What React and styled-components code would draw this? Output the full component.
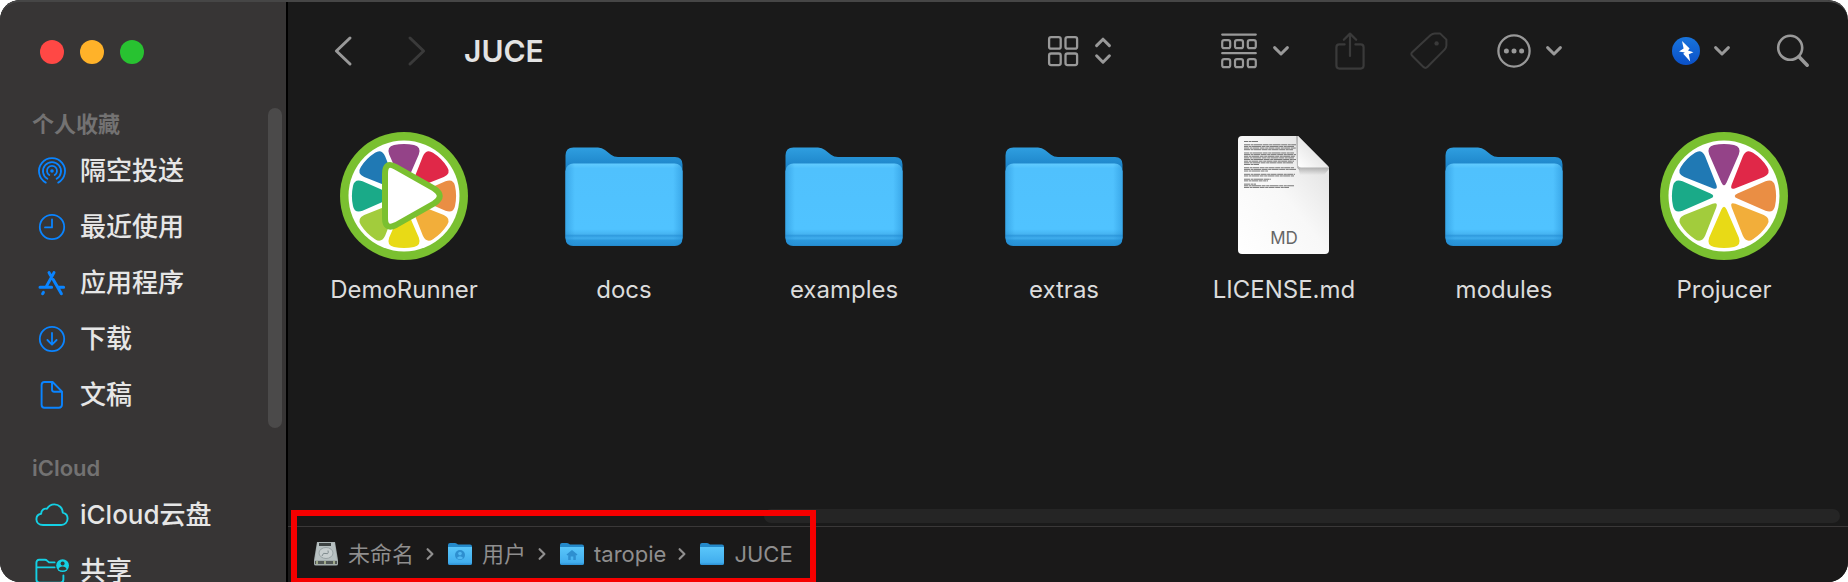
import React from "react";
import styled, { createGlobalStyle } from "styled-components";

const Global = createGlobalStyle`
  * { box-sizing: border-box; }
  body {
    margin: 0;
    background: #fff;
    font-family: Inter, "Noto Sans CJK SC", "Liberation Sans", sans-serif;
  }
  button { border: 0; padding: 0; background: none; color: inherit; font: inherit; cursor: default; }
  a { color: inherit; text-decoration: none; }
  ul, ol { list-style: none; margin: 0; padding: 0; }
  svg { display: block; flex: none; overflow: visible; }
`;

const Window = styled.div`
  position: relative;
  display: flex;
  height: 100vh;
  border-radius: 20px;
  overflow: hidden;
  background: #1a1a1a;
  color: #dfdfdf;

  &::after {
    content: "";
    position: absolute;
    inset: 0;
    border-radius: 20px;
    border-top: 2px solid #464646;
    pointer-events: none;
  }
`;

const Sidebar = styled.aside`
  position: relative;
  flex: none;
  width: 288px;
  overflow: hidden;
  background: #373535;
  border-right: 2px solid #000;
`;

const TrafficLights = styled.div`
  display: flex;
  gap: 16px;
  padding: 40px 40px 41px;
`;

const Light = styled.button`
  width: 24px;
  height: 24px;
  border-radius: 50%;
  background: ${(p) => p.$color};
`;

const Group = styled.section`
  padding-bottom: 26px;
`;

const GroupTitle = styled.h2`
  margin: 0;
  padding-left: 32px;
  font-size: 22px;
  line-height: 38px;
  font-weight: 600;
  color: #737272;
`;

const SideLink = styled.a`
  display: flex;
  align-items: center;
  gap: 8px;
  height: 56px;
  padding-left: 32px;
  font-size: 26px;
  line-height: 40px;
  font-weight: 500;
  color: #e6e6e6;
  white-space: nowrap;

  svg { color: ${(p) => p.$tint}; }
`;

const SideIcon = styled.span`
  display: flex;
  justify-content: center;
  width: 40px;
`;

const SideThumb = styled.div`
  position: absolute;
  top: 108px;
  right: 4px;
  width: 14px;
  height: 320px;
  border-radius: 7px;
  background: #4b4a4a;
`;

const Main = styled.main`
  flex: 1;
  min-width: 0;
  display: flex;
  flex-direction: column;
`;

const Toolbar = styled.header`
  flex: none;
  display: flex;
  align-items: center;
  height: 102px;
  padding: 0 38px 0 46px;
  color: #999;
`;

const Tool = styled.button`
  display: flex;
  align-items: center;
  gap: ${(p) => p.$gap || 0}px;
  margin-right: ${(p) => p.$after || 0}px;
  color: ${(p) => (p.disabled ? "#3a3a3a" : "#999")};
`;

const Title = styled.h1`
  flex: 1;
  margin: 0;
  font-size: 30px;
  line-height: 40px;
  font-weight: 600;
  color: #e3e3e3;
`;

const Files = styled.ul`
  flex: 1;
  min-height: 0;
  display: grid;
  grid-template-columns: repeat(auto-fill, 220px);
  align-content: start;
  padding: 30px 6px 0;
  overflow: hidden;
`;

const FileLink = styled.a`
  display: flex;
  flex-direction: column;
  align-items: center;
  gap: 14px;
  font-size: 24px;
  line-height: 32px;
  font-weight: 400;
  color: #dcdcdc;
`;

const ScrollTrack = styled.div`
  flex: none;
  width: 69%;
  height: 14px;
  margin: 0 8px 3px auto;
  border-radius: 7px;
  background: #252525;
`;

const PathBar = styled.nav`
  position: relative;
  flex: none;
  height: 56px;
  border-top: 1px solid #3a3838;
  background: #1a1919;
`;

const Crumbs = styled.ol`
  display: flex;
  align-items: center;
  height: 54px;
  padding-left: 26px;
`;

const Crumb = styled.li`
  display: flex;
  align-items: center;
  color: #8f8e8e;
`;

const CrumbLink = styled.a`
  display: flex;
  align-items: center;
  gap: 10px;
  font-size: 22px;
  line-height: 32px;
`;

const Separator = styled.span`
  padding: 0 14px 0 12px;
`;

const Highlight = styled.div`
  position: absolute;
  top: -17px;
  left: 3px;
  width: 525px;
  height: 74px;
  border: 6px solid #f60000;
  pointer-events: none;
`;

const stroke = (w) => ({
  fill: "none",
  stroke: "currentColor",
  strokeWidth: w,
  strokeLinecap: "round",
  strokeLinejoin: "round",
});

const AirDrop = () => (
  <svg width="28" height="28" viewBox="0 0 28 28" {...stroke(1.8)}>
    <circle cx="14" cy="14" r="1.8" fill="currentColor" stroke="none" />
    <path d="M11.3 18A5 5 0 1 1 16.7 18" />
    <path d="M9.4 21.8A9 9 0 1 1 18.6 21.8" />
    <path d="M7.8 25.6A13 13 0 1 1 20.2 25.6" />
  </svg>
);

const Clock = () => (
  <svg width="28" height="28" viewBox="0 0 28 28" {...stroke(1.8)}>
    <circle cx="14" cy="14" r="12.2" />
    <path d="M14 6.5V14.4H7" />
  </svg>
);

const Apps = () => (
  <svg width="28" height="28" viewBox="0 0 28 28" {...stroke(3)}>
    <path d="M16 3.6L8.4 17.4M5.4 23.4L4.6 24.8M11 3.6L12.6 6.4M15.2 10.6L23.4 24.8M2 18.2H13.6M20.6 18.2H25.6" />
  </svg>
);

const Download = () => (
  <svg width="28" height="28" viewBox="0 0 28 28" {...stroke(1.8)}>
    <circle cx="14" cy="14" r="12.2" />
    <path d="M14 8V19.4M9.4 15L14 19.6L18.6 15" />
  </svg>
);

const Doc = () => (
  <svg width="28" height="28" viewBox="0 0 28 28" {...stroke(1.9)}>
    <path d="M6.4 1H14.6L24 10.6V23.6Q24 26.8 20.8 26.8H6.4Q3.6 26.8 3.6 23.8V4Q3.6 1 6.4 1ZM14 1.4V8.6Q14 10.8 16.2 10.8H23.6" />
  </svg>
);

const Cloud = () => (
  <svg width="34" height="24" viewBox="0 0 34 24" {...stroke(1.9)}>
    <path d="M8 22C4 22 1.4 19.4 1.4 16.2C1.4 13.2 3.6 11.2 6.2 10.8C6 7.6 9 5 12 5.8C13.6 3 16.4 1.4 19.4 1.4C24 1.4 27.6 5 27.8 9.6C30.6 10.2 32.6 12.6 32.6 15.6C32.6 19.2 29.8 22 26.2 22Z" />
  </svg>
);

const Shared = () => (
  <svg width="34" height="26" viewBox="0 0 34 26" {...stroke(1.9)}>
    <path d="M19.6 4.4H14L12 2.6Q11.2 1.8 10 1.8H4.2Q1.4 1.8 1.4 4.8V21.6Q1.4 24.6 4.4 24.6H25.4Q28.4 24.6 28.4 21.6V17.4M1.4 9.4H19.6" />
    <circle cx="27.6" cy="7.6" r="6.4" fill="currentColor" stroke="none" />
    <circle cx="27.6" cy="5.6" r="2" fill="#373535" stroke="none" />
    <path d="M23.6 11.2Q24.4 8.6 27.6 8.6T31.6 11.2Q30 12.6 27.6 12.6T23.6 11.2Z" fill="#373535" stroke="none" />
  </svg>
);

const BackForward = ({ forward }) => (
  <svg width="18" height="30" viewBox="0 0 18 30" {...stroke(3)}>
    <path d={forward ? "M2 2L15.6 15L2 28" : "M16 2L2.4 15L16 28"} />
  </svg>
);

const ChevronDown = () => (
  <svg width="16" height="10" viewBox="0 0 16 10" {...stroke(3)}>
    <path d="M1.6 1.6L8 8L14.4 1.6" />
  </svg>
);

const UpDown = () => (
  <svg width="16" height="28" viewBox="0 0 16 28" {...stroke(3)}>
    <path d="M1.6 8.6L8 2.2L14.4 8.6M1.6 18.8L8 25.2L14.4 18.8" />
  </svg>
);

const GridIcon = () => (
  <svg width="32" height="32" viewBox="0 0 32 32" {...stroke(2.3)}>
    {[2.1, 18.5].map((x) =>
      [2.1, 18.5].map((y) => <rect key={x + "-" + y} x={x} y={y} width="11.6" height="11.6" rx="2" />)
    )}
  </svg>
);

const GroupIcon = () => (
  <svg width="36" height="36" viewBox="0 0 36 36" {...stroke(2.2)}>
    <path d="M1.2 1.6H34.8M1.2 20.2H34.8" />
    {[1.2, 14, 26.8].map((x) =>
      [7.2, 26.2].map((y) => <rect key={x + "-" + y} x={x} y={y} width="8" height="8" rx="2" />)
    )}
  </svg>
);

const Share = () => (
  <svg width="30" height="38" viewBox="0 0 30 38" {...stroke(2.2)}>
    <path d="M9.6 12.4H4.4Q1.4 12.4 1.4 15.4V33.6Q1.4 36.6 4.4 36.6H25.6Q28.6 36.6 28.6 33.6V15.4Q28.6 12.4 25.6 12.4H20.4M15 24V1.6M8.8 7.8L15 1.6L21.2 7.8" />
  </svg>
);

const Tag = () => (
  <svg width="38" height="38" viewBox="0 0 38 38" {...stroke(2)}>
    <path d="M20.4 3.2Q22.4 1.4 24.8 1.4H30L36.4 7.6V13.6Q36.4 15.8 34.6 17.6L17.6 34.8Q15.4 37 13.2 34.8L2.2 23.8Q.4 22 2.2 20.2Z" />
    <circle cx="26.6" cy="11.4" r="2.2" fill="currentColor" stroke="none" />
  </svg>
);

const More = () => (
  <svg width="34" height="34" viewBox="0 0 34 34" {...stroke(2.3)}>
    <circle cx="17" cy="17" r="15.6" />
    <g fill="currentColor" stroke="none">
      <circle cx="9.4" cy="17" r="2.5" />
      <circle cx="17" cy="17" r="2.5" />
      <circle cx="24.6" cy="17" r="2.5" />
    </g>
  </svg>
);

const Bolt = () => (
  <svg width="28" height="28" viewBox="0 0 28 28">
    <defs>
      <linearGradient id="bolt" x1="0" y1="0" x2="0" y2="1">
        <stop offset="0" stopColor="#1874dc" />
        <stop offset="1" stopColor="#0a50c8" />
      </linearGradient>
    </defs>
    <circle cx="14" cy="14" r="14" fill="url(#bolt)" />
    <path d="M10 4L17.6 11.6L16 13.4L21.4 15.2L16.8 17.2L18.2 24.4L11.2 16.8L12.8 15.6L7 14.6L11.6 11.6Z" fill="#fff" />
  </svg>
);

const Search = () => (
  <svg width="34" height="34" viewBox="0 0 34 34" {...stroke(2.6)}>
    <circle cx="14.2" cy="13.8" r="12" />
    <path d="M23 22.8L31.2 31.2" strokeWidth="3.6" />
  </svg>
);

const SLICES = ["#944388", "#e02848", "#ea8e44", "#f2ae3a", "#e8da16", "#a2cc3c", "#1aaa88", "#2079b4"];

const Citrus = ({ play }) => (
  <svg width="128" height="128" viewBox="0 0 128 128">
    <circle cx="64" cy="64" r="64" fill="#7ac030" />
    <circle cx="64" cy="64" r="55.5" fill="#fff" />
    {SLICES.map((color, i) => (
      <path
        key={color}
        fill={color}
        transform={`rotate(${i * 45} 64 64)`}
        d="M61.4 50.500Q64 56 66.6 50.500L78.800 22.500Q81.600 14.500 74 13Q64 10.800 54 13Q46.400 14.500 49.200 22.500Z"
      />
    ))}
    {play && (
      <path
        d="M45 42Q45 28.500 56 35L94 56.500Q105.500 64 94 71.500L56 93Q45 98.500 45 86Z"
        fill="#fff"
        stroke="#7ac030"
        strokeWidth="6"
        strokeLinejoin="round"
      />
    )}
  </svg>
);

const Folder = () => (
  <svg width="128" height="128" viewBox="0 0 128 128">
    <defs>
      <linearGradient id="back" x1="0" y1="0" x2="0" y2="1">
        <stop offset="0" stopColor="#2f9fe0" />
        <stop offset="0.2" stopColor="#1c83c8" />
        <stop offset="1" stopColor="#1f88cc" />
      </linearGradient>
      <linearGradient id="front" x1="0" y1="0" x2="0" y2="1">
        <stop offset="0" stopColor="#62ccff" />
        <stop offset="0.06" stopColor="#50c1fd" />
        <stop offset="0.8" stopColor="#50c3ff" />
        <stop offset="0.86" stopColor="#46b4f2" />
        <stop offset="0.88" stopColor="#2f9ade" />
        <stop offset="0.91" stopColor="#40aeee" />
        <stop offset="0.94" stopColor="#2b98dc" />
        <stop offset="1" stopColor="#2790d4" />
      </linearGradient>
      <linearGradient id="edge">
        <stop offset="0" stopColor="#2089d0" stopOpacity="0.45" />
        <stop offset="0.08" stopColor="#2089d0" stopOpacity="0" />
        <stop offset="0.92" stopColor="#2089d0" stopOpacity="0" />
        <stop offset="1" stopColor="#2089d0" stopOpacity="0.45" />
      </linearGradient>
    </defs>
    <path d="M5.5 23.5Q5.5 15.5 13.5 15.5H38Q42 15.5 45 18L51 22.8Q54 25 58 25H115Q122.500 25 122.500 32.500V106Q122.500 114 114.500 114H13.500Q5.500 114 5.500 106Z" fill="url(#back)" />
    <rect x="5.5" y="31.500" width="117" height="82" rx="8" fill="url(#front)" />
    <rect x="5.5" y="31.500" width="117" height="82" rx="8" fill="url(#edge)" />
  </svg>
);

const LINES = [14, 0, 52, 50, 52, 49, 0, 50, 52, 51, 50, 52, 50, 49, 15, 0, 50, 52, 24, 0, 51, 50, 0, 27, 24, 0, 12, 50, 45];

const MarkdownDoc = () => (
  <svg width="128" height="128" viewBox="0 0 128 128">
    <defs>
      <linearGradient id="paper" x1="0" y1="1" x2="1" y2="0">
        <stop offset="0" stopColor="#fff" />
        <stop offset="0.5" stopColor="#f8f8f8" />
        <stop offset="1" stopColor="#dcdcdc" />
      </linearGradient>
      <linearGradient id="fold" x1="0" y1="1" x2="0.6" y2="0.4">
        <stop offset="0" stopColor="#fff" />
        <stop offset="1" stopColor="#e4e4e4" />
      </linearGradient>
      <linearGradient id="shade" x1="0" y1="0" x2="0" y2="1">
        <stop offset="0" stopColor="#000" stopOpacity="0.3" />
        <stop offset="1" stopColor="#000" stopOpacity="0" />
      </linearGradient>
    </defs>
    <path d="M22 4H78L109 35V118Q109 122 105 122H22Q18 122 18 118V8Q18 4 22 4Z" fill="url(#paper)" />
    {LINES.map((w, i) =>
      w ? <path key={i} d={`M24 ${9.500 + i * 1.640}h${w}`} stroke="#777" strokeWidth="1" strokeDasharray={`${4 + (i % 3)} .6 3 .4 ${6 + (i % 4)} .6`} /> : null
    )}
    <path d="M78 34H109V37L104 43H80Z" fill="url(#shade)" />
    <path d="M76 4H78V35L80 38L77 36Z" fill="#000" opacity="0.2" />
    <path d="M78 4L109 35.500H81Q78 35.500 78 32.500Z" fill="url(#fold)" />
    <text x="64" y="112" textAnchor="middle" fontSize="17" fill="#666" fontFamily="Inter, sans-serif">MD</text>
  </svg>
);

const MiniFolder = ({ mark }) => (
  <svg width="24" height="24" viewBox="0 0 24 24">
    <defs>
      <linearGradient id="mini" x1="0" y1="0" x2="0" y2="1">
        <stop offset="0" stopColor="#5ac6fa" />
        <stop offset="0.85" stopColor="#42aeee" />
        <stop offset="1" stopColor="#2c8fd2" />
      </linearGradient>
    </defs>
    <path d="M0 3Q0 1 2 1H7Q8.500 1 10 2.500H22Q24 2.500 24 4.500V21Q24 23 22 23H2Q0 23 0 21Z" fill="#2489ca" />
    <path d="M0 5H24V21Q24 23 22 23H2Q0 23 0 21Z" fill="url(#mini)" />
    {mark === "user" && (
      <g>
        <circle cx="12" cy="13" r="5" fill="#2e8fd0" />
        <circle cx="12" cy="11.600" r="1.800" fill="#50b8f2" />
        <path d="M8.800 16Q12 12.600 15.200 16Q12 18.400 8.800 16Z" fill="#50b8f2" />
      </g>
    )}
    {mark === "home" && <path d="M6.500 12.600L12 8L17.500 12.600L16.600 13.600L15.800 13V18H13.300V14.500H10.700V18H8.200V13L7.400 13.600Z" fill="#2e8fd0" />}
  </svg>
);

const Disk = () => (
  <svg width="24" height="24" viewBox="0 0 24 24">
    <path d="M3 0H21L24 18V22Q24 23.500 22 23.500H2Q0 23.500 0 22V18Z" fill="#a3adad" />
    <path d="M3.500 .5H20.500L23 18H1Z" fill="#b7c0c1" />
    <rect x="5" y="1" width="12" height="3" fill="#3d4343" />
    <path d="M1 19H23V22H1Z" fill="#525856" />
    <path d="M3 19V22M20 19V22M11 19V22" stroke="#b8c49a" strokeWidth="1.500" />
    <ellipse cx="12" cy="11" rx="7" ry="5.500" fill="#c7cecf" stroke="#98a2a4" />
    <path d="M8 14Q9 10 12 11.500Q15 12.500 14 8.500" fill="none" stroke="#7f8b8e" strokeWidth="1" />
  </svg>
);

const CrumbArrow = () => (
  <svg width="8" height="12" viewBox="0 0 8 12" {...stroke(2.2)}>
    <path d="M1.600 1.200L6.400 6L1.600 10.800" />
  </svg>
);

const GROUPS = [
  {
    title: "个人收藏",
    tint: "#0a84ff",
    items: [
      ["隔空投送", AirDrop],
      ["最近使用", Clock],
      ["应用程序", Apps],
      ["下载", Download],
      ["文稿", Doc],
    ],
  },
  {
    title: "iCloud",
    tint: "#14d0e4",
    items: [
      ["iCloud云盘", Cloud],
      ["共享", Shared],
    ],
  },
];

const FILES = [
  ["DemoRunner", <Citrus play />],
  ["docs", <Folder />],
  ["examples", <Folder />],
  ["extras", <Folder />],
  ["LICENSE.md", <MarkdownDoc />],
  ["modules", <Folder />],
  ["Projucer", <Citrus />],
];

const PATH = [
  ["未命名", <Disk />],
  ["用户", <MiniFolder mark="user" />],
  ["taropie", <MiniFolder mark="home" />],
  ["JUCE", <MiniFolder />],
];

export default function App() {
  return (
    <>
      <Global />
      <Window>
        <Sidebar>
          <TrafficLights>
            <Light $color="#ff4845" aria-label="Close" />
            <Light $color="#ffb229" aria-label="Minimize" />
            <Light $color="#28c231" aria-label="Zoom" />
          </TrafficLights>
          {GROUPS.map((group) => (
            <Group key={group.title}>
              <GroupTitle>{group.title}</GroupTitle>
              <ul>
                {group.items.map(([label, Icon]) => (
                  <li key={label}>
                    <SideLink href="#" $tint={group.tint}>
                      <SideIcon><Icon /></SideIcon>
                      {label}
                    </SideLink>
                  </li>
                ))}
              </ul>
            </Group>
          ))}
          <SideThumb />
        </Sidebar>
        <Main>
          <Toolbar>
            <Tool aria-label="Back" $after={56}><BackForward /></Tool>
            <Tool aria-label="Forward" disabled $after={38}><BackForward forward /></Tool>
            <Title>JUCE</Title>
            <Tool aria-label="View" $gap={16} $after={110}><GridIcon /><UpDown /></Tool>
            <Tool aria-label="Group by" $gap={16} $after={46}><GroupIcon /><ChevronDown /></Tool>
            <Tool aria-label="Share" disabled $after={45}><Share /></Tool>
            <Tool aria-label="Tags" disabled $after={49}><Tag /></Tool>
            <Tool aria-label="More" $gap={15} $after={110}><More /><ChevronDown /></Tool>
            <Tool aria-label="Actions" $gap={14} $after={46}><Bolt /><ChevronDown /></Tool>
            <Tool aria-label="Search"><Search /></Tool>
          </Toolbar>
          <Files>
            {FILES.map(([name, icon]) => (
              <li key={name}>
                <FileLink href="#">{icon}{name}</FileLink>
              </li>
            ))}
          </Files>
          <ScrollTrack />
          <PathBar aria-label="Path">
            <Crumbs>
              {PATH.map(([name, icon], i) => (
                <Crumb key={name}>
                  <CrumbLink href="#">{icon}{name}</CrumbLink>
                  {i < PATH.length - 1 && <Separator><CrumbArrow /></Separator>}
                </Crumb>
              ))}
            </Crumbs>
            <Highlight />
          </PathBar>
        </Main>
      </Window>
    </>
  );
}
